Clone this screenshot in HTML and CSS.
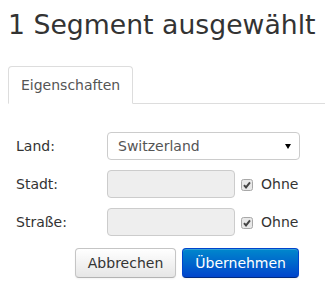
FILE: index.html
```html
<html>
    <head>
        <meta charset="utf-8">
        <link rel="stylesheet" href="styles.css">
    </head>
    <body>
        <h1 class="title">1 Segment ausgewählt</h1>

        <div class="tabs">
            <div class="tab active">Eigenschaften</div>
        </div>

        <form class="segform">
            <label class="lbl">Land:</label>
            <div class="selectbox">
                <span class="selval">Switzerland</span>
                <svg class="caret" width="6" height="5" viewBox="0 0 6 5"><polygon points="0,0 6,0 3,5" fill="#000"/></svg>
            </div>

            <label class="lbl">Stadt:</label>
            <div class="ctrl">
                <div class="txt disabled"></div>
                <span class="chk"><svg width="12" height="12" viewBox="0 0 12 12"><rect x="0.5" y="0.5" width="11" height="11" rx="2" fill="#e8e8e8" stroke="#a8a8a8"/><path d="M3 6.2 L5 8.4 L9 3.4" fill="none" stroke="#444" stroke-width="2"/></svg></span>
                <span class="ohne">Ohne</span>
            </div>

            <label class="lbl">Straße:</label>
            <div class="ctrl">
                <div class="txt disabled"></div>
                <span class="chk"><svg width="12" height="12" viewBox="0 0 12 12"><rect x="0.5" y="0.5" width="11" height="11" rx="2" fill="#e8e8e8" stroke="#a8a8a8"/><path d="M3 6.2 L5 8.4 L9 3.4" fill="none" stroke="#444" stroke-width="2"/></svg></span>
                <span class="ohne">Ohne</span>
            </div>

            <div class="actions">
                <button type="button" class="btn">Abbrechen</button>
                <button type="button" class="btn btn-primary">Übernehmen</button>
            </div>
        </form>
    </body>
</html>
```

FILE: styles.css
```css
body
{
    margin: 0;
    padding: 8px 8px 0 8px;
    font-family: "DejaVu Sans", Verdana, sans-serif;
    font-size: 14px;
    color: #333;
    background: #fff;
}
.title
{
    margin: 0;
    font-size: 26.7px;
    line-height: 34px;
    font-weight: normal;
    white-space: nowrap;
    color: #333;
}
.tabs
{
    display: flex;
    margin-top: 24px;
    margin-right: -8px;
    border-bottom: 1px solid #ddd;
}
.tab
{
    padding: 8px 12px;
    line-height: 20px;
    border: 1px solid #ddd;
    border-bottom-color: transparent;
    border-radius: 4px 4px 0 0;
    margin-bottom: -1px;
    background: #fff;
    color: #555;
}
.segform
{
    display: grid;
    grid-template-columns: 91px auto;
    row-gap: 10px;
    width: 284px;
    margin: 28px 0 0 0;
    padding-left: 8px;
}
.lbl
{
    display: flex;
    align-items: center;
    height: 28px;
}
.selectbox
{
    position: relative;
    display: flex;
    align-items: center;
    height: 26px;
    padding-left: 10px;
    border: 1px solid #ccc;
    border-radius: 4px;
    background: #fff;
    color: #555;
}
.caret
{
    position: absolute;
    right: 8px;
    top: 11px;
}
.ctrl
{
    display: flex;
    align-items: center;
    height: 28px;
}
.txt
{
    width: 126px;
    height: 26px;
    border: 1px solid #ccc;
    border-radius: 4px;
}
.disabled
{
    background: #eee;
}
.chk
{
    display: flex;
    margin-left: 6px;
    margin-top: 1px;
}
.ohne
{
    margin-left: 8px;
}
.actions
{
    grid-column: 1 / 3;
    display: flex;
    justify-content: flex-end;
    gap: 6px;
    margin-top: 2px;
    margin-right: 1px;
}
.btn
{
    height: 30px;
    padding: 0 12px;
    font-family: inherit;
    font-size: 14px;
    color: #333;
    border: 1px solid #c5c5c5;
    border-bottom-color: #b3b3b3;
    border-radius: 4px;
    background: linear-gradient(#ffffff, #e6e6e6);
    box-shadow: inset 0 1px 0 rgba(255,255,255,.2), 0 1px 2px rgba(0,0,0,.05);
}
.btn-primary
{
    color: #fff;
    border-color: #0044cc #0044cc #002a80;
    background: linear-gradient(#0088cc, #0044cc);
}
```
